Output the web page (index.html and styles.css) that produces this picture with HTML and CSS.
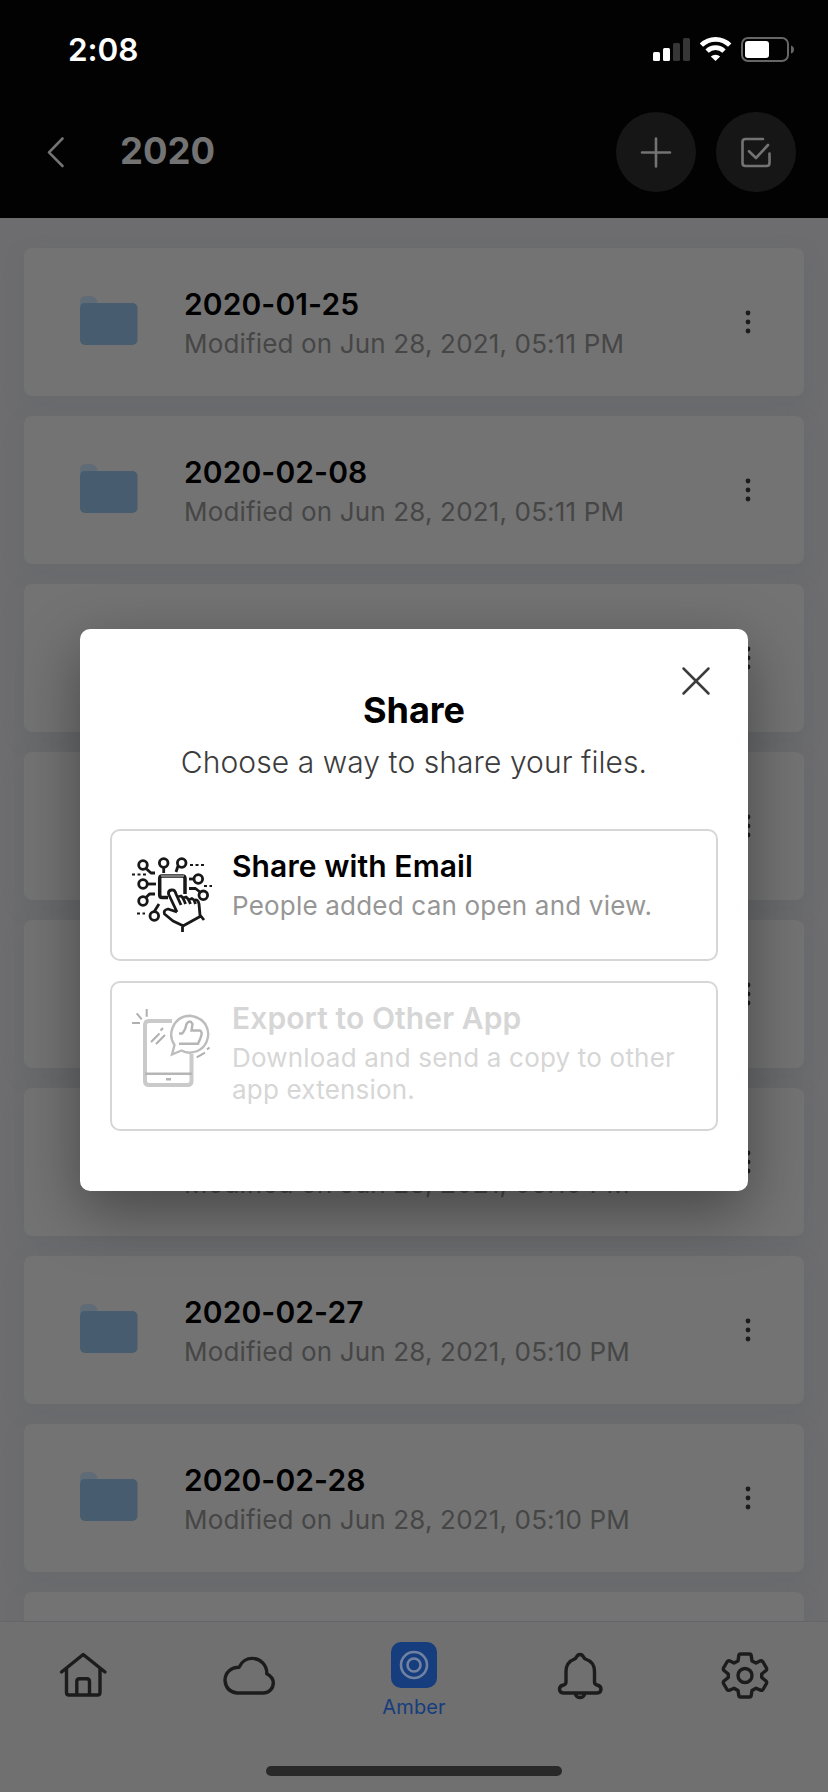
FILE: index.html
```html
<!DOCTYPE html>
<html lang="en">
<head>
<meta charset="utf-8">
<title>Files</title>
<link rel="stylesheet" href="styles.css">
</head>
<body>
<svg class="defs" width="0" height="0" aria-hidden="true">
  <symbol id="folder" viewBox="0 0 58 49"><path d="M0 14V6Q0 0 6 0H10Q17 0 18 9L24 14Z" fill="#5f6b76"/><rect y="7" width="57.500" height="42" rx="5" fill="#485c70"/></symbol>
  <symbol id="dots" viewBox="0 0 6 24"><g fill="#1c1c1c"><circle cx="3" cy="3" r="2.400"/><circle cx="3" cy="12" r="2.400"/><circle cx="3" cy="21" r="2.400"/></g></symbol>
</svg>
<div class="screen">
  <header class="header">
    <div class="status">
      <span class="time">2:08</span>
      <svg width="142" height="26" viewBox="0 0 142 26" fill="#fff">
        <rect x="0" y="15" width="7" height="9" rx="1.500"/><rect x="10" y="11" width="7" height="13" rx="1.500"/>
        <rect x="20" y="6" width="7" height="18" rx="1.500" fill="#363636"/><rect x="30" y="1" width="7" height="23" rx="1.500" fill="#363636"/>
        <g fill="none" stroke="#fff" stroke-width="4.700"><path d="M48.400 8.200a20 20 0 0 1 28.300 0"/><path d="M54.100 14.100a12 12 0 0 1 16.900 0"/></g>
        <path d="M62.500 24l-4.700-4.400a6.800 6.800 0 0 1 9.400 0z"/>
        <rect x="89" y="1" width="46" height="23" rx="6" fill="none" stroke="#666" stroke-width="2"/>
        <rect x="92" y="4" width="24" height="17" rx="3"/><path d="M138 8.500q3 1 3 4t-3 4z" fill="#666"/>
      </svg>
    </div>
    <div class="nav">
      <svg class="back" width="18" height="32" viewBox="0 0 18 32"><path d="M15.500 2.500L2 16.300L15.500 30"/></svg>
      <h1 class="title">2020</h1>
      <span class="round"><svg width="32" height="32" viewBox="0 0 32 32"><path d="M16 2.500v28M2 16.500h28"/></svg></span>
      <span class="round"><svg width="32" height="32" viewBox="0 0 32 32"><path d="M23 3H5.500Q2.500 3 2.500 6V27Q2.500 30 5.500 30H26.500Q29.500 30 29.500 27V17.500M9 15.200L16 22L28 9"/></svg></span>
    </div>
  </header>
  <main class="list">
    <article class="card"><svg class="folder"><use href="#folder"/></svg><div class="info"><h2>2020-01-25</h2><p>Modified on Jun 28, 2021, 05:11 PM</p></div><svg class="dots"><use href="#dots"/></svg></article>
    <article class="card"><svg class="folder"><use href="#folder"/></svg><div class="info"><h2>2020-02-08</h2><p>Modified on Jun 28, 2021, 05:11 PM</p></div><svg class="dots"><use href="#dots"/></svg></article>
    <article class="card"><svg class="dots"><use href="#dots"/></svg></article>
    <article class="card"><svg class="dots"><use href="#dots"/></svg></article>
    <article class="card"><svg class="dots"><use href="#dots"/></svg></article>
    <article class="card"><svg class="folder"><use href="#folder"/></svg><div class="info"><h2>&nbsp;</h2><p>Modified on Jun 28, 2021, 05:10 PM</p></div><svg class="dots"><use href="#dots"/></svg></article>
    <article class="card"><svg class="folder"><use href="#folder"/></svg><div class="info"><h2>2020-02-27</h2><p>Modified on Jun 28, 2021, 05:10 PM</p></div><svg class="dots"><use href="#dots"/></svg></article>
    <article class="card"><svg class="folder"><use href="#folder"/></svg><div class="info"><h2>2020-02-28</h2><p>Modified on Jun 28, 2021, 05:10 PM</p></div><svg class="dots"><use href="#dots"/></svg></article>
    <article class="card"></article>
  </main>
  <footer class="tabs">
    <div class="tabrow">
      <span class="tab"><svg width="50" height="50" viewBox="0 0 50 50"><path d="M3.500 22L25.200 4.500L47 22M8.500 18.500V42.500Q8.500 45 11 45H39.500Q42 45 42 42.500V18.500M18.800 45V31.500Q18.800 28.700 21.600 28.700H28.700Q31.500 28.700 31.500 31.500V45"/></svg></span>
      <span class="tab"><svg width="54" height="50" viewBox="0 0 54 50"><path d="M16 43Q5 41.500 4 30.500C4 22 10.500 17.500 18 17.300C20.500 11.500 26 8.200 31.500 8.400C39.500 8.700 46 15 45.800 23.800C50 26 52.300 29 52.300 33C52.300 39 47.500 43 42 43Z"/></svg></span>
      <span class="tab active"><svg width="46" height="46" viewBox="0 0 46 46"><rect width="46" height="46" rx="10" fill="#163d7e"/><g fill="none" stroke="#7182a0" stroke-width="2.600"><circle cx="23" cy="23" r="13"/><circle cx="23" cy="23" r="6.500"/></g></svg><b>Amber</b></span>
      <span class="tab"><svg width="50" height="50" viewBox="0 0 50 50"><path d="M8.500 43Q4.500 43 4.500 39Q4.500 36 8.500 35Q11 34.500 11 32V21.500C11 13.500 15.500 10.500 19.500 9C22 8.500 21 4.500 25 4.500S28 8.500 30.500 9C35 10.500 39.500 14.500 39.500 21.500V32Q39.500 34.500 42 35Q46 36 46 39Q46 43 42 43ZM20.500 44.500Q21.500 47.500 25 47.500T29.500 44.500"/></svg></span>
      <span class="tab"><svg width="50" height="50" viewBox="0 0 50 50"><circle cx="25" cy="25.500" r="7"/><path d="M20.500 4H29.500Q31 4 31.200 5.500L32 11L36 13L40.500 10.800Q42 10.500 43 12L46.500 18Q47 19.500 46 20.500L41.700 24V27.500L46 31Q47 32 46.500 33.500L43 39.500Q42 40.800 40.500 40.200L36 38.300L32 40.500L31.200 45.500Q31 47 29.500 47H20.500Q19 47 18.800 45.500L18 40.500L14 38.300L9.500 40.200Q8 40.800 7 39.500L3.500 33.500Q3 32 4 31L8.300 27.500V24L4 20.500Q3 19.500 3.500 18L7 12Q8 10.500 9.500 10.800L14 13L18 11L18.800 5.500Q19 4 20.500 4Z"/></svg></span>
    </div>
    <div class="home-bar"></div>
  </footer>
  <section class="modal" role="dialog" aria-label="Share">
    <svg class="close" width="28" height="28" viewBox="0 0 28 28"><path d="M1.500 1.500L26.500 26.500M26.500 1.500L1.500 26.500"/></svg>
    <h2 class="modal-title">Share</h2>
    <p class="modal-sub">Choose a way to share your files.</p>
    <div class="options">
      <div class="option">
        <svg width="82" height="82" viewBox="0 0 82 82" fill="none" stroke="#181818" stroke-width="2.800" stroke-linejoin="round">
          <path d="M36 42.500H30Q27.700 42.500 27.700 40V23.500Q27.700 21 30 21H50.500Q53 21 53 23.500V39" stroke-width="3.500"/>
          <path d="M29 21H52" stroke="#999" stroke-width="1.500"/>
          <circle cx="11" cy="10" r="4.300"/><path d="M14 13.500L19 18H23"/>
          <circle cx="31.700" cy="8" r="4.300"/><path d="M31.700 12.500V18"/>
          <circle cx="49.700" cy="8" r="4.300"/><path d="M46 11L44 17"/>
          <circle cx="11" cy="29" r="4.300"/><path d="M15.500 29H24"/>
          <circle cx="11" cy="46" r="4.300"/><path d="M14 42.500L17.500 39H23"/>
          <circle cx="66.300" cy="24" r="4.300"/><path d="M57 24H62"/>
          <circle cx="71.300" cy="40.300" r="4.300"/><path d="M57 33.500H63.500L68 37"/>
          <circle cx="22.300" cy="61" r="4.300"/><path d="M22.300 56.500L27 49"/>
          <path d="M0 19.500H14M58 10H72M72 31H80M5 58.500H13" stroke-width="2" stroke-dasharray="3 2.500"/>
          <path d="M45 57L36.500 39Q36 35.500 39.500 35T44 39L49 50M45 42L49 41Q51 42 53.500 49M51 43L54 42Q56 43 58.500 49M56.500 45L60 43.500Q62 44 63.500 49M62 45.500Q66 43.500 67 49L68 60L72 65M45 57L36 54Q31 55 32.500 59L41 66L50.500 70.500V77M50 71.500L69 61"/>
        </svg>
        <div class="option-text"><h3>Share with Email</h3><p>People added can open and view.</p></div>
      </div>
      <div class="option disabled">
        <svg width="82" height="82" viewBox="0 0 82 82" fill="none" stroke="#b5b5b5" stroke-width="2.400">
          <path d="M40 15H17Q13 15 13 19V75Q13 79 17 79H55.500Q59.500 79 59.500 75V48" stroke="#cacaca" stroke-width="4"/>
          <path d="M13 67.700H60M34 73.300H39"/>
          <path d="M40 48.500L42.500 39Q37 31 40.500 22Q45 10 58 9.700Q75 12 76.300 28Q75 45 58 46.700Q53 46.700 49.500 44.500Z" stroke="#bdbdbd"/>
          <path d="M47 27.500H50Q53 25 54.500 18Q58 13 60.500 18L59.500 24.500H68Q71 26 68.500 32L66 37.800H47"/>
          <path d="M19 36L27.500 27.500M24 38L33 29M28.500 24.500L31 22M14.700 3V10.700M4.700 7.300L9.700 13.300M0 17H8M64.700 51.300L73 46.700M75 43.500L77.500 41.500" stroke="#b0b0b0" stroke-width="2"/>
        </svg>
        <div class="option-text"><h3>Export to Other App</h3><p>Download and send a copy to other app extension.</p></div>
      </div>
    </div>
  </section>
</div>
</body>
</html>
```
FILE: styles.css
```css
* { box-sizing: border-box; }
body, h1, h2, h3, p { margin: 0; }
body { font-family: Inter, "Liberation Sans", sans-serif; background: #6c6c70; }
svg { display: block; flex: none; overflow: visible; }
.defs { position: absolute; }
.screen { position: relative; width: 828px; height: 1792px; overflow: hidden; display: flex; flex-direction: column; background: #6d6d70; }
.header { height: 218px; flex: none; background: #020202; padding: 36px 32px 0 47px; }
.status { height: 28px; display: flex; align-items: center; justify-content: space-between; padding: 0 1px 0 21px; }
.time { color: #fff; font-size: 31.500px; font-weight: 600; line-height: 28px; letter-spacing: -.1px; }
.nav { margin-top: 48px; height: 80px; display: flex; align-items: center; gap: 20px; }
.nav svg { fill: none; stroke: #737373; stroke-width: 2.600; stroke-linecap: round; stroke-linejoin: round; }
.title { flex: 1; margin: 0 0 2px 35px; color: #737373; font-size: 36.500px; font-weight: 700; line-height: 40px; }
.round { width: 80px; height: 80px; border-radius: 50%; background: #161616; display: grid; place-items: center; }
.list { flex: 1; min-height: 0; overflow: hidden; padding: 30px 24px 0; display: flex; flex-direction: column; gap: 20px; }
.card { flex: none; height: 148px; border-radius: 8px; background: #737373; box-shadow: 0 8px 20px rgba(90,95,98,.26); display: flex; align-items: center; padding: 0 53px 0 56px; }
.folder { width: 58px; height: 49px; margin-bottom: 3px; }
.dots { width: 6px; height: 24px; margin-left: auto; }
.info { margin-left: 46px; padding-top: 4px; }
.info h2 { color: #000; font-size: 30px; line-height: 40px; font-weight: 600; letter-spacing: .1px; white-space: nowrap; }
.info p { color: #464646; font-size: 26px; line-height: 40px; letter-spacing: .16px; white-space: nowrap; }
.tabs { flex: none; height: 171px; border-top: 1px solid #64646a; background: #707070; display: flex; flex-direction: column; align-items: center; }
.tabrow { align-self: stretch; display: grid; grid-template-columns: repeat(5, 1fr); height: 144px; }
.tab { display: flex; flex-direction: column; align-items: center; padding-top: 28px; }
.tab > svg { fill: none; stroke: #1c1c1c; stroke-width: 3.400; stroke-linejoin: round; stroke-linecap: round; }
.active { padding-top: 20px; }
.active > svg { stroke: none; }
.active b { color: #163d7e; font-size: 20px; font-weight: 400; line-height: 24px; margin-top: 7px; letter-spacing: .1px; }
.home-bar { width: 296px; height: 10px; border-radius: 5px; background: #292929; }
.modal { position: absolute; left: 80px; top: 629px; width: 668px; height: 562px; border-radius: 10px; background: #fff; box-shadow: 0 20px 60px rgba(0,0,0,.38); padding: 59px 30px; text-align: center; }
.close { position: absolute; right: 38px; top: 38px; stroke: #3c3c3c; stroke-width: 2.500; stroke-linecap: round; }
.modal-title { font-size: 36px; line-height: 44px; font-weight: 700; }
.modal-sub { margin-top: 10px; font-size: 30px; line-height: 40px; font-weight: 350; color: #3c3c3c; letter-spacing: .07px; }
.options { margin-top: 47px; display: flex; flex-direction: column; gap: 20px; text-align: left; }
.option { height: 132px; border: 2px solid #d6d6d6; border-radius: 10px; display: flex; gap: 18px; padding: 15px 20px 0; }
.option svg { margin-top: 9px; }
.option h3 { font-size: 30px; line-height: 40px; font-weight: 600; letter-spacing: .1px; }
.option p { font-size: 26px; line-height: 32px; color: #969696; letter-spacing: .2px; margin-top: 4px; }
.disabled { height: 150px; }
.disabled svg { margin-top: 8px; }
.disabled h3, .option.disabled p { color: #d6d6d6; }
```
